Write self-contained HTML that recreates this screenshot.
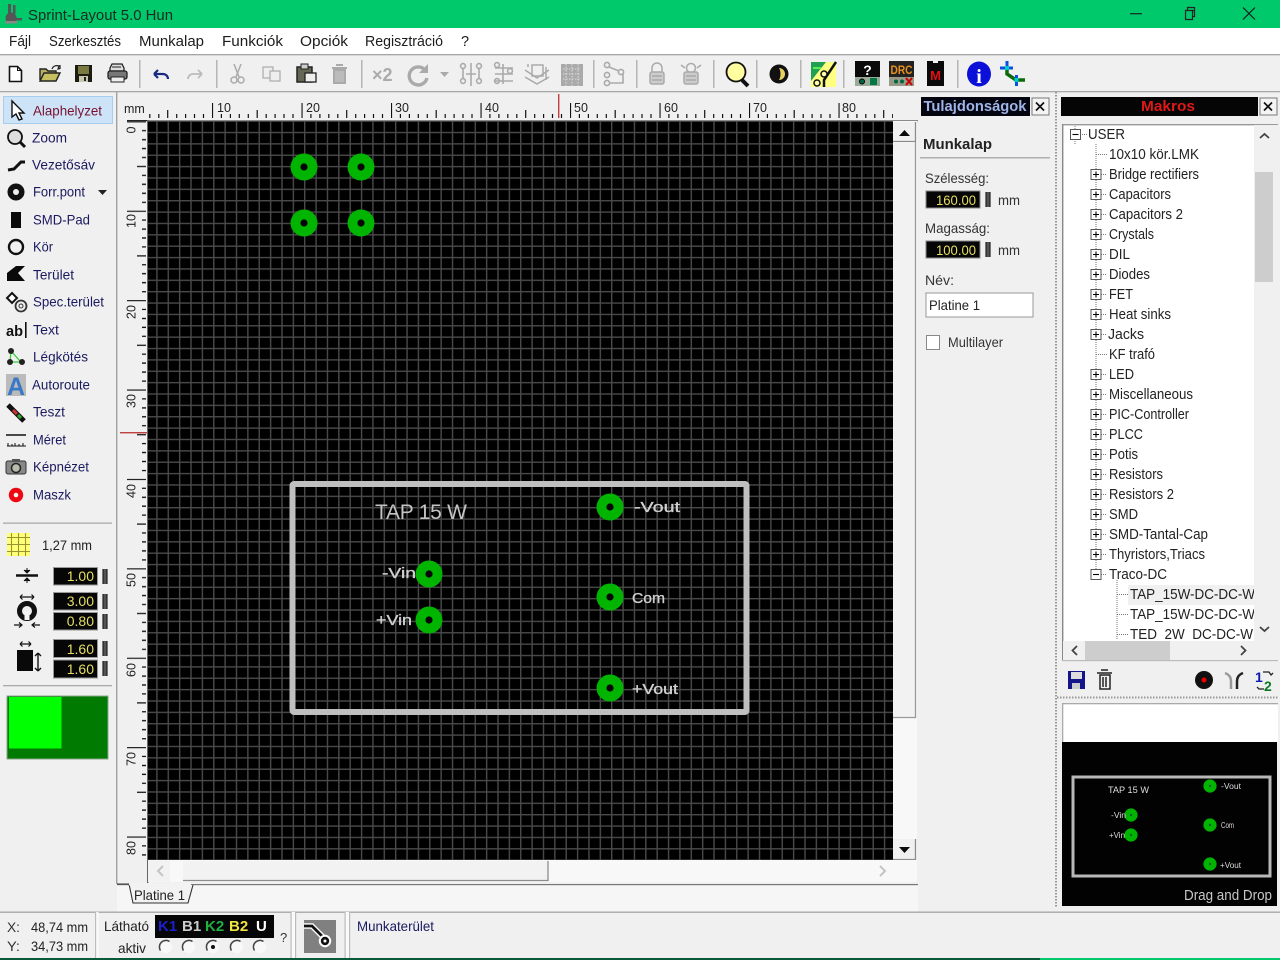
<!DOCTYPE html>
<html><head><meta charset="utf-8"><title>Sprint-Layout 5.0 Hun</title>
<style>
html,body{margin:0;padding:0;width:1280px;height:960px;overflow:hidden;background:#f0f0f0}
svg{display:block;position:absolute;left:0;top:0}
text{font-family:"Liberation Sans",sans-serif;white-space:pre}
.m{font-size:14.5px;fill:#1c1c1c}
.t{font-size:14px;fill:#1a1a5e}
.p{font-size:14px;fill:#333}
.r{font-size:12.5px;fill:#222}
.y{font-size:14px;fill:#e6de64;text-anchor:end}
.n{font-size:14.5px;fill:#222}
.c{font-size:15px;fill:#cfcfcf;stroke:#cfcfcf;stroke-width:.35}
.ds{fill:none;stroke:#aaa;stroke-width:2}
.sep{fill:#b5b5b5}
</style></head><body>
<svg width="1280" height="960" viewBox="0 0 1280 960" xmlns="http://www.w3.org/2000/svg">
<defs>
<pattern id="grid" patternUnits="userSpaceOnUse" x="156.2" y="131.8" width="11.37" height="11.37">
<rect width="11.37" height="11.37" fill="#000"/>
<rect x="0" y="0" width="1.4" height="11.37" fill="#4a4a4a"/>
<rect x="0" y="0" width="11.37" height="1.4" fill="#4a4a4a"/>
</pattern>
<pattern id="hr" patternUnits="userSpaceOnUse" x="122.5" y="100" width="89.5" height="20">
<path d="M.5 3V18M45.2 10V18M9.4 14V18M18.4 14V18M27.3 14V18M36.3 14V18M54.2 14V18M63.1 14V18M72 14V18M81 14V18" stroke="#111" stroke-width="1.2" fill="none"/>
</pattern>
<pattern id="vr" patternUnits="userSpaceOnUse" x="125" y="121.3" width="22" height="89.4">
<path d="M2 .5H21M12 45.2H21M17 9.4H21M17 18.4H21M17 27.3H21M17 36.2H21M17 54.1H21M17 63H21M17 72H21M17 81H21" stroke="#111" stroke-width="1.3" fill="none"/>
</pattern>
<g id="plus"><rect x="-5" y="-5" width="10" height="10" fill="#fff" stroke="#555"/><path d="M-3 0H3M0-3V3" stroke="#000" stroke-width="1.1"/></g>
<g id="minus"><rect x="-5" y="-5" width="10" height="10" fill="#fff" stroke="#555"/><path d="M-3 0H3" stroke="#000" stroke-width="1.1"/></g>
<g id="spin"><rect x="0" y="0" width="6" height="15" fill="#888"/><rect x=".8" y="0" width="1.8" height="15" fill="#333"/><rect x="3.4" y="0" width="1.8" height="15" fill="#333"/></g>
<g id="pad"><circle r="13.5" fill="#00b400"/><circle r="3.6" fill="#050505"/></g>
<g id="mp"><circle r="6.6" fill="#00b400"/><circle r="1.2" fill="#063"/></g>
<g id="radio"><circle r="6.2" fill="#f8f8f8"/><path d="M-5.500 3.500A6.500 6.500 0 0 1 3.500-5.500" fill="none" stroke="#444" stroke-width="1.5"/></g>
</defs>

<!-- title bar -->
<rect width="1280" height="28" fill="#00c96b"/>
<g fill="#555">
<circle cx="11" cy="18" r="5.5"/><rect x="8" y="4" width="3" height="10"/><rect x="13" y="5" width="2.5" height="9"/><rect x="15" y="18" width="7" height="2.5"/><rect x="5" y="21" width="12" height="2.5" fill="#888"/>
</g>
<text x="28" y="20" font-size="15" fill="#1a2a20" textLength="145" lengthAdjust="spacingAndGlyphs">Sprint-Layout 5.0 Hun</text>
<rect x="1130" y="13" width="12" height="1.4" fill="#111" opacity=".75"/>
<path d="M1187.5 10.5h7v-3h-7zM1185.5 10.5h7v9h-7zM1194.5 7.500v9h-2" fill="none" stroke="#222" stroke-width="1.2"/>
<path d="M1243 7.5L1255 19.5M1255 7.5L1243 19.5" stroke="#1a1a1a" stroke-width="1.2"/>

<!-- menu -->
<rect y="28" width="1280" height="26" fill="#fff"/>
<rect y="54" width="1280" height="1.4" fill="#a5a5a5"/>
<text class="m" x="9" y="46" textLength="22" lengthAdjust="spacingAndGlyphs">Fájl</text>
<text class="m" x="49" y="46" textLength="72" lengthAdjust="spacingAndGlyphs">Szerkesztés</text>
<text class="m" x="139" y="46" textLength="65" lengthAdjust="spacingAndGlyphs">Munkalap</text>
<text class="m" x="222" y="46" textLength="61" lengthAdjust="spacingAndGlyphs">Funkciók</text>
<text class="m" x="300" y="46" textLength="48" lengthAdjust="spacingAndGlyphs">Opciók</text>
<text class="m" x="365" y="46" textLength="78" lengthAdjust="spacingAndGlyphs">Regisztráció</text>
<text class="m" x="461" y="46">?</text>

<!-- toolbar -->
<rect y="55.4" width="1280" height="35.6" fill="#f0f0f0"/>
<rect y="91" width="1280" height="1.3" fill="#a8a8a8"/>
<g class="sep">
<rect x="139" y="60" width="1.5" height="28"/><rect x="216" y="60" width="1.5" height="28"/><rect x="361" y="60" width="1.5" height="28"/><rect x="593" y="60" width="1.5" height="28"/><rect x="636" y="60" width="1.5" height="28"/><rect x="713" y="60" width="1.5" height="28"/><rect x="756" y="60" width="1.5" height="28"/><rect x="800" y="60" width="1.5" height="28"/><rect x="843" y="60" width="1.5" height="28"/><rect x="957" y="60" width="1.5" height="28"/>
</g>
<!-- new -->
<path d="M9.5 66.5h8l4 4v11h-12z" fill="#fff" stroke="#111" stroke-width="1.6"/><path d="M17.5 66.5v4h4" fill="none" stroke="#111"/>
<!-- open -->
<path d="M40 80V69h6l2 2h8v3" fill="#b8b060" stroke="#222" stroke-width="1.4"/><path d="M40 81l4-8h16l-4 8z" fill="#c8c060" stroke="#222" stroke-width="1.4"/><path d="M52 69c1-3 4-4 7-3l-1 3 2-.5v-3.500" fill="none" stroke="#222" stroke-width="1.2"/>
<!-- save -->
<rect x="75" y="65" width="17" height="17" fill="#1c1c10"/><rect x="78" y="66" width="11" height="8" fill="#7a7a40"/><rect x="79" y="76" width="9" height="6" fill="#c8c8b0"/><rect x="84" y="77" width="2" height="4" fill="#222"/>
<!-- print -->
<path d="M112 64h10l2 4v3h-14v-3z" fill="#ddd" stroke="#222" stroke-width="1.3"/><rect x="108" y="71" width="19" height="8" rx="2" fill="#777" stroke="#222" stroke-width="1.3"/><rect x="111" y="77" width="13" height="5" fill="#eee" stroke="#222"/><path d="M112 67h9" stroke="#222"/>
<!-- undo redo -->
<path d="M154 74h9a5 5 0 0 1 5 5M154 74l4-4M154 74l4 4" fill="none" stroke="#1a2a80" stroke-width="2.2"/>
<path d="M202 74h-9a5 5 0 0 0-5 5M202 74l-4-4M202 74l-4 4" fill="none" stroke="#bbb" stroke-width="1.8"/>
<!-- cut -->
<path d="M234 64l5 13M241 64l-5 13" class="ds" style="stroke-width:1.5"/><circle cx="234" cy="80" r="3" class="ds" style="stroke-width:1.5"/><circle cx="241" cy="80" r="3" class="ds" style="stroke-width:1.5"/>
<!-- copy -->
<rect x="263" y="67" width="10" height="11" fill="#eee" stroke="#aaa" stroke-width="1.2"/><rect x="270" y="71" width="10" height="10" fill="#eee" stroke="#aaa" stroke-width="1.2"/>
<!-- paste -->
<rect x="297" y="67" width="15" height="15" fill="#665" stroke="#222" stroke-width="1.5"/><rect x="301" y="64" width="7" height="5" fill="#ccc" stroke="#222"/><rect x="305" y="73" width="11" height="9" fill="#eee" stroke="#222" stroke-width="1.3"/>
<!-- delete -->
<path d="M334 70h11v13h-11zM332 68h15M336 65h7" fill="#bbb" stroke="#aaa" stroke-width="2"/>
<!-- x2 -->
<text x="372" y="81" font-size="18" font-weight="bold" fill="#aaa">×2</text>
<!-- rotate -->
<path d="M425 70a9 9 0 1 0 2 8" fill="none" stroke="#aaa" stroke-width="3.4"/><path d="M428 64v9h-9z" fill="#aaa"/>
<path d="M440 72h9l-4.500 5z" fill="#aaa"/>
<!-- mirror -->
<g fill="none" stroke="#aaa" stroke-width="1.6"><circle cx="463" cy="66" r="2.400"/><circle cx="463" cy="81" r="2.400"/><circle cx="479" cy="66" r="2.400"/><circle cx="479" cy="81" r="2.400"/><path d="M463 68v11M479 68v11M471 63v23M466 74h10"/></g>
<!-- align -->
<g fill="none" stroke="#aaa" stroke-width="1.600"><path d="M495 68h18M495 74h18M495 81h18M503 64v20"/><circle cx="497" cy="65" r="2.400"/><circle cx="510" cy="71" r="2.400"/><circle cx="497" cy="81" r="2.400"/></g>
<!-- flip -->
<g fill="none" stroke="#aaa" stroke-width="1.500"><rect x="532" y="65" width="11" height="11"/><path d="M525 70l12 8 12-8M528 67v-3M546 67v13M525 77l12 7 12-7"/></g>
<!-- pattern -->
<rect x="561" y="64" width="22" height="22" fill="#aaa"/><path d="M563 69h18M563 74h18M563 79h18M566 64v22M572 64v22M578 64v22" stroke="#ddd" stroke-dasharray="1.500 1.500"/>
<!-- nodes -->
<g fill="none" stroke="#aaa" stroke-width="1.600"><circle cx="607" cy="65" r="2.600"/><circle cx="607" cy="75" r="2.600"/><circle cx="607" cy="83" r="2.600"/><circle cx="621" cy="72" r="2.600"/><path d="M609 67l10 4M609 83h14v-9"/></g>
<!-- lock -->
<g fill="none" stroke="#aaa" stroke-width="1.500"><path d="M652 72v-4a5 5 0 0 1 10 0v4"/><rect x="650" y="72" width="14" height="12" rx="2" fill="#ccc"/><path d="M652 76h10M652 80h10"/></g>
<g fill="none" stroke="#aaa" stroke-width="1.500"><circle cx="691" cy="68" r="4.500"/><rect x="684" y="72" width="14" height="12" rx="2" fill="#ccc"/><path d="M686 76h10M686 80h10M681 65l4 3M701 65l-4 3"/></g>
<!-- magnifier -->
<circle cx="736" cy="72" r="9.500" fill="#ffffa0" stroke="#111" stroke-width="1.800"/><path d="M742 80l6 6" stroke="#111" stroke-width="4"/>
<!-- contrast -->
<circle cx="779" cy="74" r="9.500" fill="#111"/><path d="M779 68a6 6 0 0 1 0 12c2-3 2-9 0-12z" fill="#e8d060"/>
<!-- color routes -->
<rect x="811" y="62" width="25" height="25" fill="#ffff80"/><path d="M811 62h15l-15 19z" fill="#20a050"/><path d="M836 62L824 80v7" stroke="#111" stroke-width="2.500" fill="none"/><circle cx="824" cy="74" r="3" fill="#ffa" stroke="#111" stroke-width="1.500"/><circle cx="817" cy="83" r="3" fill="#ffa" stroke="#111" stroke-width="1.500"/><path d="M813 68h8" stroke="#5e5" stroke-width="2"/>
<!-- ? box -->
<rect x="855" y="61" width="25" height="25" fill="#0a0a0a"/><rect x="855" y="77" width="25" height="9" fill="#9a9"/><text x="867.500" y="75" text-anchor="middle" font-size="14" font-weight="bold" fill="#fff">?</text><circle cx="862" cy="81.500" r="2.500" fill="#064" stroke="#000"/><rect x="870" y="78" width="7" height="7" fill="#074"/>
<!-- DRC -->
<rect x="889" y="61" width="25" height="25" fill="#222"/><text x="901.500" y="74" text-anchor="middle" font-size="12" font-weight="bold" fill="#e89020" textLength="22" lengthAdjust="spacingAndGlyphs">DRC</text><rect x="889" y="77" width="25" height="9" fill="#998"/><circle cx="896" cy="81.500" r="2" fill="#064"/><circle cx="902" cy="81.500" r="2" fill="#064"/><path d="M906 78l6 7M912 78l-6 7" stroke="#c00" stroke-width="2"/>
<!-- M -->
<path d="M927 61h6v2h5v-2h6v25h-17z" fill="#0a0a0a"/><text x="935.500" y="80" text-anchor="middle" font-size="13" font-weight="bold" fill="#e01010">M</text>
<!-- info -->
<ellipse cx="979" cy="74" rx="12" ry="12.500" fill="#0b10d8"/><text x="979" y="83" text-anchor="middle" font-size="20" font-weight="bold" fill="#fff" style="font-family:'Liberation Serif',serif">i</text>
<!-- crop -->
<path d="M1007 68v6l9 6h9" fill="none" stroke="#0a6a0a" stroke-width="3.500"/><path d="M1000 68h13M1007 61v8M1016.500 75v11" fill="none" stroke="#0a50e0" stroke-width="3"/><rect x="1005" y="66" width="4" height="4" fill="#0cc"/><rect x="1014.500" y="78" width="4" height="4" fill="#0cc"/>

<!-- left tool panel -->
<rect x="116" y="92" width="1.400" height="792" fill="#a0a0a0"/>
<rect x="3.500" y="96.500" width="109" height="27" fill="#cde4f8" stroke="#a6cdee"/>
<path d="M12 101v16l4-3 3 6 3-1-3-6h5z" fill="#fff" stroke="#111" stroke-width="1.400"/>
<g transform="translate(0 -.7)">
<text class="t" x="33" y="116" style="fill:#7a1030" textLength="69" lengthAdjust="spacingAndGlyphs">Alaphelyzet</text>
<text class="t" x="32" y="143" textLength="35" lengthAdjust="spacingAndGlyphs">Zoom</text>
<text class="t" x="32" y="170" textLength="63" lengthAdjust="spacingAndGlyphs">Vezetősáv</text>
<text class="t" x="33" y="197" textLength="52" lengthAdjust="spacingAndGlyphs">Forr.pont</text>
<text class="t" x="33" y="225" textLength="57" lengthAdjust="spacingAndGlyphs">SMD-Pad</text>
<text class="t" x="33" y="252" textLength="20" lengthAdjust="spacingAndGlyphs">Kör</text>
<text class="t" x="33" y="280" textLength="41" lengthAdjust="spacingAndGlyphs">Terület</text>
<text class="t" x="33" y="307" textLength="71" lengthAdjust="spacingAndGlyphs">Spec.terület</text>
<text class="t" x="33" y="335" textLength="26" lengthAdjust="spacingAndGlyphs">Text</text>
<text class="t" x="33" y="362" textLength="55" lengthAdjust="spacingAndGlyphs">Légkötés</text>
<text class="t" x="32" y="390" textLength="58" lengthAdjust="spacingAndGlyphs">Autoroute</text>
<text class="t" x="33" y="417" textLength="32" lengthAdjust="spacingAndGlyphs">Teszt</text>
<text class="t" x="33" y="445" textLength="33" lengthAdjust="spacingAndGlyphs">Méret</text>
<text class="t" x="33" y="472" textLength="56" lengthAdjust="spacingAndGlyphs">Képnézet</text>
<text class="t" x="33" y="500" textLength="38" lengthAdjust="spacingAndGlyphs">Maszk</text>
</g>
<!-- tool icons -->
<circle cx="15" cy="137" r="7" fill="#ddd" stroke="#111" stroke-width="1.800"/><path d="M20 142l5 5" stroke="#111" stroke-width="3"/>
<path d="M8 170l6-1 7-7h4" fill="none" stroke="#111" stroke-width="3"/>
<path d="M98 190h9l-4.500 5z" fill="#222"/>
<circle cx="16" cy="192" r="7" fill="#111" stroke="#111" stroke-width="3"/><circle cx="16" cy="192" r="3" fill="#f0f0f0"/>
<rect x="11" y="212" width="10" height="16" fill="#0a0a0a"/>
<circle cx="16" cy="247" r="7" fill="none" stroke="#111" stroke-width="2.400"/>
<path d="M7 281v-8l9-7h9l-7 7 7 8z" fill="#0a0a0a"/>
<path d="M12 293l5 5-5 5-5-5z" fill="#fff" stroke="#111" stroke-width="2"/><circle cx="21" cy="306" r="5.500" fill="none" stroke="#333" stroke-width="1.800"/><circle cx="21" cy="306" r="2" fill="none" stroke="#333"/>
<text x="6" y="336" font-size="15" font-weight="bold" fill="#111" textLength="17" lengthAdjust="spacingAndGlyphs">ab</text><rect x="25" y="322" width="1.600" height="16" fill="#111"/>
<path d="M11 351l9 10h0M11 351l-1 11M10 362h12" stroke="#3c3" stroke-width="1.300" fill="none"/><circle cx="11" cy="351" r="3" fill="#222"/><circle cx="10" cy="362" r="3" fill="#222"/><circle cx="22" cy="362" r="3" fill="#222"/>
<rect x="6" y="374" width="20" height="22" fill="#bbb"/><text x="16" y="395" text-anchor="middle" font-size="25" font-weight="bold" fill="#3a78c8">A</text>
<path d="M8 405l16 16" stroke="#111" stroke-width="5"/><path d="M13 410l4 4" stroke="#c33" stroke-width="3"/><path d="M18 415l3 3" stroke="#3a3" stroke-width="3"/>
<path d="M6 435h20" stroke="#111" stroke-width="1.400"/><path d="M7 446h19M8 446v-3M12 446v-2M15 446v-3M19 446v-2M23 446v-3" stroke="#111" fill="none"/>
<rect x="6" y="461" width="20" height="13" rx="2" fill="#888" stroke="#333"/><circle cx="16" cy="468" r="4.500" fill="#bba" stroke="#222" stroke-width="1.500"/><rect x="12" y="459" width="8" height="3" fill="#555"/>
<circle cx="16" cy="495" r="7.200" fill="#ef0812"/><circle cx="16" cy="495" r="2.300" fill="#f4f4f4"/>

<rect x="3" y="522.500" width="109" height="1.300" fill="#aaa"/>
<rect x="7" y="533" width="23" height="23" fill="#ffff78"/>
<path d="M7 537.500h23M7 544.500h23M7 551.500h23M11.500 533v23M18.500 533v23M25.500 533v23" stroke="#9a9430" stroke-width="1.100"/>
<text class="p" x="42" y="550" style="fill:#222" textLength="50" lengthAdjust="spacingAndGlyphs">1,27 mm</text>

<!-- spinner inputs -->
<g fill="#060606" stroke="#999">
<rect x="53.500" y="567.500" width="44" height="17.500"/><rect x="53.500" y="592.500" width="44" height="17.500"/><rect x="53.500" y="612.500" width="44" height="17.500"/><rect x="53.500" y="639.500" width="44" height="18"/><rect x="53.500" y="660" width="44" height="18"/>
</g>
<text class="y" x="94" y="581">1.00</text><text class="y" x="94" y="606">3.00</text><text class="y" x="94" y="626">0.80</text><text class="y" x="94" y="654">1.60</text><text class="y" x="94" y="674">1.60</text>
<use href="#spin" x="102" y="569"/><use href="#spin" x="102" y="594"/><use href="#spin" x="102" y="614"/><use href="#spin" x="102" y="641"/><use href="#spin" x="102" y="661"/>
<!-- track width icon -->
<path d="M16 575.500h22" stroke="#111" stroke-width="2.400"/><path d="M27 568v4M24 570l3 3 3-3M27 583v-4M24 581l3-3 3 3" stroke="#111" fill="#111"/>
<!-- pad icon -->
<path d="M20 597h14M20 597l2.500-2.500M20 597l2.500 2.500M34 597l-2.500-2.500M34 597l-2.500 2.500" stroke="#111" fill="none" stroke-width="1.200"/>
<circle cx="27" cy="611" r="7.500" fill="none" stroke="#111" stroke-width="5"/><rect x="24.500" y="611" width="5" height="9" fill="#f4f4f4"/>
<path d="M14 625h8M19 622.500l3 2.500-3 2.500M40 625h-8M35 622.500l-3 2.500 3 2.500" stroke="#111" fill="none" stroke-width="1.200"/>
<!-- smd icon -->
<path d="M20 644h11M20 644l2.500-2.500M20 644l2.500 2.500M31 644l-2.500-2.500M31 644l-2.500 2.500" stroke="#111" fill="none" stroke-width="1.200"/>
<rect x="17" y="650" width="16" height="21" fill="#090909"/>
<path d="M38 653v18M38 653l-3 3M38 653l3 3M38 671l-3-3M38 671l3-3" stroke="#111" fill="none" stroke-width="1.400"/>

<rect x="3" y="685" width="109" height="1.300" fill="#aaa"/>
<rect x="7" y="696" width="101" height="63" fill="#007a00" stroke="#8aa58a"/>
<rect x="9" y="697" width="52.500" height="51.500" fill="#00ff00"/>

<!-- rulers -->
<rect x="148" y="100" width="745" height="20" fill="url(#hr)"/>
<rect x="125" y="121" width="22" height="739" fill="url(#vr)"/>
<rect x="127" y="120" width="20" height="1.200" fill="#222"/>
<text class="r" x="124" y="113" style="fill:#222" font-size="13">mm</text>
<g class="r">
<text x="217" y="112">10</text><text x="306" y="112">20</text><text x="395" y="112">30</text><text x="485" y="112">40</text><text x="574" y="112">50</text><text x="664" y="112">60</text><text x="753" y="112">70</text><text x="842" y="112">80</text>
</g>
<rect x="558" y="94" width="1.400" height="24" fill="#c04040"/>
<rect x="120" y="432" width="27" height="1.400" fill="#c04040"/>
<g class="r" text-anchor="middle">
<text transform="translate(135.500 130) rotate(-90)">0</text>
<text transform="translate(135.500 221) rotate(-90)">10</text>
<text transform="translate(135.500 312) rotate(-90)">20</text>
<text transform="translate(135.500 401) rotate(-90)">30</text>
<text transform="translate(135.500 491) rotate(-90)">40</text>
<text transform="translate(135.500 580) rotate(-90)">50</text>
<text transform="translate(135.500 670) rotate(-90)">60</text>
<text transform="translate(135.500 759) rotate(-90)">70</text>
<text transform="translate(135.500 848) rotate(-90)">80</text>
</g>

<!-- canvas -->
<rect x="147" y="120" width="771" height="1.500" fill="#8a8a8a"/>
<rect x="147" y="120" width="1.500" height="765" fill="#666"/>
<rect x="148" y="121" width="745" height="739" fill="url(#grid)"/>
<use href="#pad" x="304" y="167"/><use href="#pad" x="361" y="167"/><use href="#pad" x="304" y="223"/><use href="#pad" x="361" y="223"/>
<rect x="292.500" y="484" width="454" height="228" rx="1.500" fill="none" stroke="#bfbfbf" stroke-width="6"/>
<use href="#pad" x="429" y="574"/><use href="#pad" x="429" y="620"/><use href="#pad" x="610" y="507"/><use href="#pad" x="610" y="597"/><use href="#pad" x="610" y="688"/>
<text x="375" y="519" font-size="21" fill="#c4c4c4" textLength="92" lengthAdjust="spacing">TAP 15 W</text>
<text class="c" x="382" y="578" textLength="34" lengthAdjust="spacingAndGlyphs">-Vin</text>
<text class="c" x="376" y="625" textLength="36" lengthAdjust="spacingAndGlyphs">+Vin</text>
<text class="c" x="634" y="512" textLength="46" lengthAdjust="spacingAndGlyphs">-Vout</text>
<text class="c" x="632" y="603" textLength="33" lengthAdjust="spacingAndGlyphs">Com</text>
<text class="c" x="632" y="694" textLength="46" lengthAdjust="spacingAndGlyphs">+Vout</text>

<!-- vertical scrollbar -->
<rect x="893" y="121" width="24" height="739" fill="#f8f8f8"/>
<rect x="893" y="122" width="22" height="20" fill="#f0f0f0"/>
<path d="M893 141.500H915.500V122" fill="none" stroke="#8c8c8c" stroke-width="1.300"/>
<path d="M899 136h11l-5.500-6z" fill="#0a0a0a"/>
<rect x="893" y="142" width="22" height="576" fill="#f2f2f2"/>
<path d="M893 717.500H915.500V142" fill="none" stroke="#9a9a9a" stroke-width="1.300"/>
<rect x="893" y="839" width="22" height="21" fill="#f0f0f0"/>
<path d="M893 859.500H915.500V839" fill="none" stroke="#8c8c8c" stroke-width="1.300"/>
<path d="M899 847h11l-5.500 6z" fill="#0a0a0a"/>
<!-- horizontal scrollbar -->
<rect x="148" y="860" width="769" height="22" fill="#f8f8f8"/>
<rect x="148" y="860.500" width="22" height="21" fill="#f2f2f2"/>
<path d="M163 866l-5 5 5 5" fill="none" stroke="#c4c4c4" stroke-width="2"/>
<path d="M880 866l5 5-5 5" fill="none" stroke="#c4c4c4" stroke-width="2"/>
<rect x="183" y="861" width="365" height="20" fill="#f2f2f2"/>
<path d="M183 880.500H548V861" fill="none" stroke="#8c8c8c" stroke-width="1.300"/>
<rect x="117" y="884" width="801" height="1.300" fill="#777"/>
<rect x="117" y="885.300" width="801" height="26" fill="#f6f6f6"/>
<path d="M117 884h12l4 19h55l5-18" fill="#f2f2f2" stroke="#333" stroke-width="1.100"/>
<rect x="129" y="883" width="62" height="2.300" fill="#f2f2f2"/>
<text x="134" y="900" font-size="14" fill="#222" textLength="51" lengthAdjust="spacingAndGlyphs">Platine 1</text>

<!-- properties panel -->
<rect x="921" y="97" width="109" height="19" fill="#050510"/>
<text x="923.500" y="111" font-size="15" font-weight="bold" fill="#9fb4e8" textLength="103" lengthAdjust="spacingAndGlyphs">Tulajdonságok</text>
<rect x="1032" y="98" width="17" height="17" fill="#f4f4f4" stroke="#777"/>
<path d="M1036 102.500l8 8M1044 102.500l-8 8" stroke="#111" stroke-width="1.700"/>
<text x="923" y="149" font-size="14.500" font-weight="bold" fill="#222" textLength="69" lengthAdjust="spacingAndGlyphs">Munkalap</text>
<rect x="920" y="157" width="130" height="1.500" fill="#b0b0b0"/>
<text class="p" x="925" y="183" textLength="64" lengthAdjust="spacingAndGlyphs">Szélesség:</text>
<rect x="926" y="191" width="54" height="17" fill="#060606" stroke="#888"/>
<text class="y" x="976" y="205" textLength="40" lengthAdjust="spacingAndGlyphs">160.00</text>
<use href="#spin" x="985" y="192"/>
<text class="p" x="998" y="205" textLength="22" lengthAdjust="spacingAndGlyphs">mm</text>
<text class="p" x="925" y="233" textLength="65" lengthAdjust="spacingAndGlyphs">Magasság:</text>
<rect x="926" y="241" width="54" height="17" fill="#060606" stroke="#888"/>
<text class="y" x="976" y="255" textLength="40" lengthAdjust="spacingAndGlyphs">100.00</text>
<use href="#spin" x="985" y="242"/>
<text class="p" x="998" y="255" textLength="22" lengthAdjust="spacingAndGlyphs">mm</text>
<text class="p" x="925" y="285" textLength="29" lengthAdjust="spacingAndGlyphs">Név:</text>
<rect x="926" y="293" width="107" height="24" fill="#fff" stroke="#999"/>
<text x="929" y="310" font-size="14" fill="#222" textLength="51" lengthAdjust="spacingAndGlyphs">Platine 1</text>
<rect x="926.500" y="335.500" width="13" height="14" fill="#fff" stroke="#888"/>
<text class="p" x="948" y="347" textLength="55" lengthAdjust="spacingAndGlyphs">Multilayer</text>

<!-- dotted divider -->
<path d="M1056 92V908" stroke="#999" stroke-width="2" stroke-dasharray="1.500 1.500"/>

<!-- macros panel -->
<rect x="1061" y="97" width="197" height="19" fill="#050505"/>
<text x="1168" y="111" text-anchor="middle" font-size="15" font-weight="bold" fill="#e01818" textLength="54" lengthAdjust="spacingAndGlyphs">Makros</text>
<rect x="1260" y="98" width="17" height="17" fill="#f4f4f4" stroke="#777"/>
<path d="M1264 102.500l8 8M1272 102.500l-8 8" stroke="#111" stroke-width="1.700"/>

<rect x="1062" y="124" width="216" height="537" fill="#fff"/>
<rect x="1062" y="124" width="216" height="1.400" fill="#999"/>
<rect x="1062" y="124" width="1.400" height="537" fill="#888"/>
<!-- tree lines -->
<g fill="none" stroke="#777" stroke-dasharray="1 1">
<path d="M1075 126V130M1075 139V144M1080 134.500H1087"/>
<path d="M1096 144V570M1096 154.500H1107"/>
<path d="M1101 174.500H1107M1101 194.500H1107M1101 214.500H1107M1101 234.500H1107M1101 254.500H1107M1101 274.500H1107M1101 294.500H1107M1101 314.500H1107M1101 334.500H1107M1096 354.500H1107M1101 374.500H1107M1101 394.500H1107M1101 414.500H1107M1101 434.500H1107M1101 454.500H1107M1101 474.500H1107M1101 494.500H1107M1101 514.500H1107M1101 534.500H1107M1101 554.500H1107M1101 574.500H1107"/>
<path d="M1117 580V640M1117 594.500H1128M1117 614.500H1128M1117 634.500H1128"/>
</g>
<use href="#minus" x="1075.500" y="134.500"/>
<use href="#plus" x="1096" y="174.500"/><use href="#plus" x="1096" y="194.500"/><use href="#plus" x="1096" y="214.500"/><use href="#plus" x="1096" y="234.500"/><use href="#plus" x="1096" y="254.500"/><use href="#plus" x="1096" y="274.500"/><use href="#plus" x="1096" y="294.500"/><use href="#plus" x="1096" y="314.500"/><use href="#plus" x="1096" y="334.500"/><use href="#plus" x="1096" y="374.500"/><use href="#plus" x="1096" y="394.500"/><use href="#plus" x="1096" y="414.500"/><use href="#plus" x="1096" y="434.500"/><use href="#plus" x="1096" y="454.500"/><use href="#plus" x="1096" y="474.500"/><use href="#plus" x="1096" y="494.500"/><use href="#plus" x="1096" y="514.500"/><use href="#plus" x="1096" y="534.500"/><use href="#plus" x="1096" y="554.500"/>
<use href="#minus" x="1096" y="574.500"/>
<g transform="translate(0 -.8)">
<text class="n" x="1088" y="140" textLength="37" lengthAdjust="spacingAndGlyphs">USER</text>
<text class="n" x="1109" y="160" textLength="90" lengthAdjust="spacingAndGlyphs">10x10 kör.LMK</text>
<text class="n" x="1109" y="180" textLength="90" lengthAdjust="spacingAndGlyphs">Bridge rectifiers</text>
<text class="n" x="1109" y="200" textLength="62" lengthAdjust="spacingAndGlyphs">Capacitors</text>
<text class="n" x="1109" y="220" textLength="74" lengthAdjust="spacingAndGlyphs">Capacitors 2</text>
<text class="n" x="1109" y="240" textLength="45" lengthAdjust="spacingAndGlyphs">Crystals</text>
<text class="n" x="1109" y="260" textLength="21" lengthAdjust="spacingAndGlyphs">DIL</text>
<text class="n" x="1109" y="280" textLength="41" lengthAdjust="spacingAndGlyphs">Diodes</text>
<text class="n" x="1109" y="300" textLength="24" lengthAdjust="spacingAndGlyphs">FET</text>
<text class="n" x="1109" y="320" textLength="62" lengthAdjust="spacingAndGlyphs">Heat sinks</text>
<text class="n" x="1108" y="340" textLength="36" lengthAdjust="spacingAndGlyphs">Jacks</text>
<text class="n" x="1109" y="360" textLength="46" lengthAdjust="spacingAndGlyphs">KF trafó</text>
<text class="n" x="1109" y="380" textLength="25" lengthAdjust="spacingAndGlyphs">LED</text>
<text class="n" x="1109" y="400" textLength="84" lengthAdjust="spacingAndGlyphs">Miscellaneous</text>
<text class="n" x="1109" y="420" textLength="80" lengthAdjust="spacingAndGlyphs">PIC-Controller</text>
<text class="n" x="1109" y="440" textLength="34" lengthAdjust="spacingAndGlyphs">PLCC</text>
<text class="n" x="1109" y="460" textLength="29" lengthAdjust="spacingAndGlyphs">Potis</text>
<text class="n" x="1109" y="480" textLength="54" lengthAdjust="spacingAndGlyphs">Resistors</text>
<text class="n" x="1109" y="500" textLength="65" lengthAdjust="spacingAndGlyphs">Resistors 2</text>
<text class="n" x="1109" y="520" textLength="29" lengthAdjust="spacingAndGlyphs">SMD</text>
<text class="n" x="1109" y="540" textLength="99" lengthAdjust="spacingAndGlyphs">SMD-Tantal-Cap</text>
<text class="n" x="1109" y="560" textLength="96" lengthAdjust="spacingAndGlyphs">Thyristors,Triacs</text>
<text class="n" x="1109" y="580" textLength="58" lengthAdjust="spacingAndGlyphs">Traco-DC</text>
</g>
<rect x="1128" y="585" width="126" height="20" fill="#f0f0f0"/>
<g transform="translate(0 -.8)">
<text class="n" x="1130" y="600" textLength="125" lengthAdjust="spacingAndGlyphs">TAP_15W-DC-DC-W</text>
<text class="n" x="1130" y="620" textLength="125" lengthAdjust="spacingAndGlyphs">TAP_15W-DC-DC-W</text>
<text class="n" x="1130" y="640" textLength="123" lengthAdjust="spacingAndGlyphs">TED_2W_DC-DC-W</text>
</g>
<rect x="1063" y="641" width="215" height="22" fill="#f0f0f0"/>
<rect x="1254" y="125" width="24" height="537" fill="#f0f0f0"/>
<rect x="1255" y="172" width="18" height="110" fill="#cdcdcd"/>
<path d="M1260 138l4.500-4 4.500 4" fill="none" stroke="#444" stroke-width="1.800"/>
<path d="M1260 632l4.500 4 4.500-4" fill="none" stroke="#444" stroke-width="1.800" transform="translate(0 -5)"/>
<rect x="1085" y="641" width="85" height="19" fill="#cdcdcd"/>
<path d="M1077 646l-4.500 4.500 4.500 4.500" fill="none" stroke="#444" stroke-width="1.800"/>
<path d="M1241 646l4.500 4.500-4.500 4.500" fill="none" stroke="#444" stroke-width="1.800"/>
<rect x="1062" y="660" width="216" height="1.200" fill="#bbb"/>

<!-- macro toolbar -->
<rect x="1068" y="671" width="17" height="18" fill="#15158a"/><rect x="1071" y="672" width="11" height="7" fill="#ddd"/><rect x="1072" y="683" width="8" height="6" fill="#ccc"/>
<path d="M1100 675h10v14h-10zM1097 673h15M1101 670h7M1103 677v10M1106 677v10" fill="none" stroke="#222" stroke-width="1.500"/>
<circle cx="1204" cy="680" r="9" fill="#111"/><circle cx="1204" cy="680" r="2.500" fill="#e00"/>
<path d="M1225 673c5 2 6 5 6 9v7" fill="none" stroke="#999" stroke-width="2.500"/><path d="M1243 673c-5 2-6 5-6 9v7" fill="none" stroke="#222" stroke-width="2.500"/>
<text x="1255" y="682" font-size="14" font-weight="bold" fill="#0b1bb0">1</text><text x="1264" y="691" font-size="14" font-weight="bold" fill="#0a7a20">2</text>
<path d="M1263 672h6l2 3l2-2M1257 687l2 2h5" stroke="#222" fill="none" stroke-width="1.300"/>

<path d="M1057 697.500H1278" stroke="#999" stroke-width="2" stroke-dasharray="1.500 1.500"/>

<!-- preview -->
<rect x="1062" y="703" width="216" height="39" fill="#fff"/>
<rect x="1062" y="703" width="216" height="1.300" fill="#aaa"/>
<rect x="1062" y="703" width="1.300" height="39" fill="#aaa"/>
<rect x="1062" y="742" width="215" height="164" fill="#020202"/>
<rect x="1073" y="777" width="197" height="99" fill="none" stroke="#b8b8b8" stroke-width="3"/>
<use href="#mp" x="1131" y="815"/><use href="#mp" x="1131" y="835"/><use href="#mp" x="1210" y="786"/><use href="#mp" x="1210" y="825"/><use href="#mp" x="1210" y="864"/>
<text x="1108" y="793" font-size="9" fill="#ddd" textLength="41" lengthAdjust="spacingAndGlyphs">TAP 15 W</text>
<text x="1111" y="818" font-size="8" fill="#ddd" textLength="15" lengthAdjust="spacingAndGlyphs">-Vin</text>
<text x="1109" y="838" font-size="8" fill="#ddd" textLength="16" lengthAdjust="spacingAndGlyphs">+Vin</text>
<text x="1221" y="789" font-size="8" fill="#ddd" textLength="20" lengthAdjust="spacingAndGlyphs">-Vout</text>
<text x="1221" y="828" font-size="8" fill="#ddd" textLength="13" lengthAdjust="spacingAndGlyphs">Com</text>
<text x="1220" y="868" font-size="8" fill="#ddd" textLength="21" lengthAdjust="spacingAndGlyphs">+Vout</text>
<text x="1272" y="900" text-anchor="end" font-size="15" fill="#c8c8c8" textLength="88" lengthAdjust="spacingAndGlyphs">Drag and Drop</text>

<!-- status bar -->
<rect y="911.500" width="1280" height="1.400" fill="#a8a8a8"/>
<rect x="96" y="912" width="2.500" height="46" fill="#fafafa"/><rect x="95" y="912" width="1.200" height="46" fill="#bbb"/>
<rect x="291" y="912" width="4.500" height="46" fill="#fafafa"/><rect x="290.500" y="912" width="1.200" height="46" fill="#bbb"/><rect x="295" y="912" width="1.200" height="46" fill="#bbb"/>
<rect x="345" y="912" width="4.500" height="46" fill="#fafafa"/><rect x="344.500" y="912" width="1.200" height="46" fill="#bbb"/><rect x="349" y="912" width="1.200" height="46" fill="#bbb"/>
<text class="p" x="7" y="932" textLength="13" lengthAdjust="spacingAndGlyphs">X:</text>
<text class="p" x="31" y="932" style="fill:#222" textLength="57" lengthAdjust="spacingAndGlyphs">48,74 mm</text>
<text class="p" x="7" y="951" textLength="13" lengthAdjust="spacingAndGlyphs">Y:</text>
<text class="p" x="31" y="951" style="fill:#222" textLength="57" lengthAdjust="spacingAndGlyphs">34,73 mm</text>
<text class="p" x="104" y="931" style="fill:#222" textLength="45" lengthAdjust="spacingAndGlyphs">Látható</text>
<rect x="155" y="915" width="119" height="23" fill="#060606"/>
<g font-size="15" font-weight="bold">
<text x="158" y="931" fill="#1a20d0">K1</text>
<text x="182" y="931" fill="#ccc">B1</text>
<text x="205" y="931" fill="#1eb040">K2</text>
<text x="229" y="931" fill="#f0e440">B2</text>
<text x="256" y="931" fill="#fff">U</text>
</g>
<text class="p" x="118" y="953" style="fill:#222" textLength="28" lengthAdjust="spacingAndGlyphs">aktiv</text>
<use href="#radio" x="166" y="947"/><use href="#radio" x="189" y="947"/><use href="#radio" x="213" y="947"/><use href="#radio" x="237" y="947"/><use href="#radio" x="260" y="947"/>
<circle cx="213" cy="947" r="2" fill="#111"/>
<text x="280" y="942" font-size="13" fill="#333">?</text>
<rect x="304" y="920" width="32" height="33" fill="#808080"/>
<path d="M304 926h8l13 13" fill="none" stroke="#fff" stroke-width="5.500"/><path d="M304 926h8l13 13" fill="none" stroke="#111" stroke-width="2.800"/>
<circle cx="325" cy="941" r="6.200" fill="#fff"/><circle cx="325" cy="941" r="4.200" fill="#111"/><circle cx="325" cy="941" r="1.500" fill="#fff"/>
<text class="t" x="357" y="931" textLength="77" lengthAdjust="spacingAndGlyphs">Munkaterület</text>
<rect y="958" width="1040" height="2" fill="#0a5a38"/>
<rect x="1040" y="958" width="240" height="2" fill="#00c96b"/>
</svg>
</body></html>
